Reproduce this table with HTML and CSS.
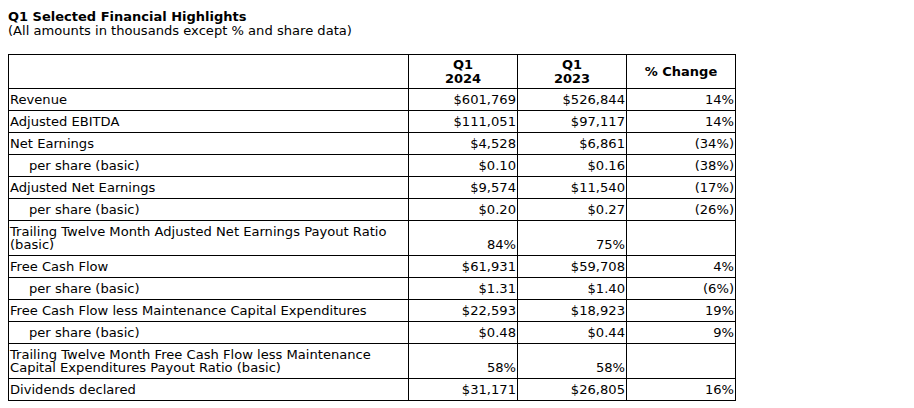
FILE: index.html
```html
<!DOCTYPE html>
<html>
<head>
<meta charset="utf-8">
<link rel="stylesheet" href="styles.css">
</head>
<body>
<div class="title">Q1 Selected Financial Highlights</div>
<div class="subtitle">(All amounts in thousands except % and share data)</div>
<table class="fin">
  <colgroup>
    <col class="c-label"><col class="c-num"><col class="c-num"><col class="c-num">
  </colgroup>
  <thead>
    <tr><th></th><th>Q1<br>2024</th><th>Q1<br>2023</th><th>% Change</th></tr>
  </thead>
  <tbody>
    <tr><td>Revenue</td><td>$601,769</td><td>$526,844</td><td>14%</td></tr>
    <tr><td>Adjusted EBITDA</td><td>$111,051</td><td>$97,117</td><td>14%</td></tr>
    <tr><td>Net Earnings</td><td>$4,528</td><td>$6,861</td><td>(34%)</td></tr>
    <tr><td class="ind">per share (basic)</td><td>$0.10</td><td>$0.16</td><td>(38%)</td></tr>
    <tr><td>Adjusted Net Earnings</td><td>$9,574</td><td>$11,540</td><td>(17%)</td></tr>
    <tr><td class="ind">per share (basic)</td><td>$0.20</td><td>$0.27</td><td>(26%)</td></tr>
    <tr><td>Trailing Twelve Month Adjusted Net Earnings Payout Ratio (basic)</td><td>84%</td><td>75%</td><td></td></tr>
    <tr><td>Free Cash Flow</td><td>$61,931</td><td>$59,708</td><td>4%</td></tr>
    <tr><td class="ind">per share (basic)</td><td>$1.31</td><td>$1.40</td><td>(6%)</td></tr>
    <tr><td>Free Cash Flow less Maintenance Capital Expenditures</td><td>$22,593</td><td>$18,923</td><td>19%</td></tr>
    <tr><td class="ind">per share (basic)</td><td>$0.48</td><td>$0.44</td><td>9%</td></tr>
    <tr><td>Trailing Twelve Month Free Cash Flow less Maintenance Capital Expenditures Payout Ratio (basic)</td><td>58%</td><td>58%</td><td></td></tr>
    <tr><td>Dividends declared</td><td>$31,171</td><td>$26,805</td><td>16%</td></tr>
  </tbody>
</table>
</body>
</html>
```
FILE: styles.css
```css
body {
  margin: 8px;
  font-family: "DejaVu Sans", Verdana, sans-serif;
  font-size: 13px;
  line-height: 14px;
  color: #000;
  background: #fff;
}
.title {
  font-weight: bold;
  margin-top: 2px;
}
.subtitle {
  font-size: 13.1px;
  margin-bottom: 16px;
}
.fin {
  border-collapse: collapse;
  width: 728px;
  table-layout: fixed;
  font-size: 13.1px;
  line-height: 13px;
}
.c-label { width: 400px; }
.c-num { width: 109px; }
.fin th, .fin td {
  border: 1px solid #000;
  padding: 4px 1px 4px 1px;
  vertical-align: bottom;
}
.fin th {
  text-align: center;
  vertical-align: middle;
  font-weight: bold;
  font-size: 13px;
  line-height: 14px;
  padding: 3px 1px 2px 1px;
}
.fin td { text-align: right; }
.fin td:first-child { text-align: left; }
.fin td.ind { padding-left: 20px; }
```
